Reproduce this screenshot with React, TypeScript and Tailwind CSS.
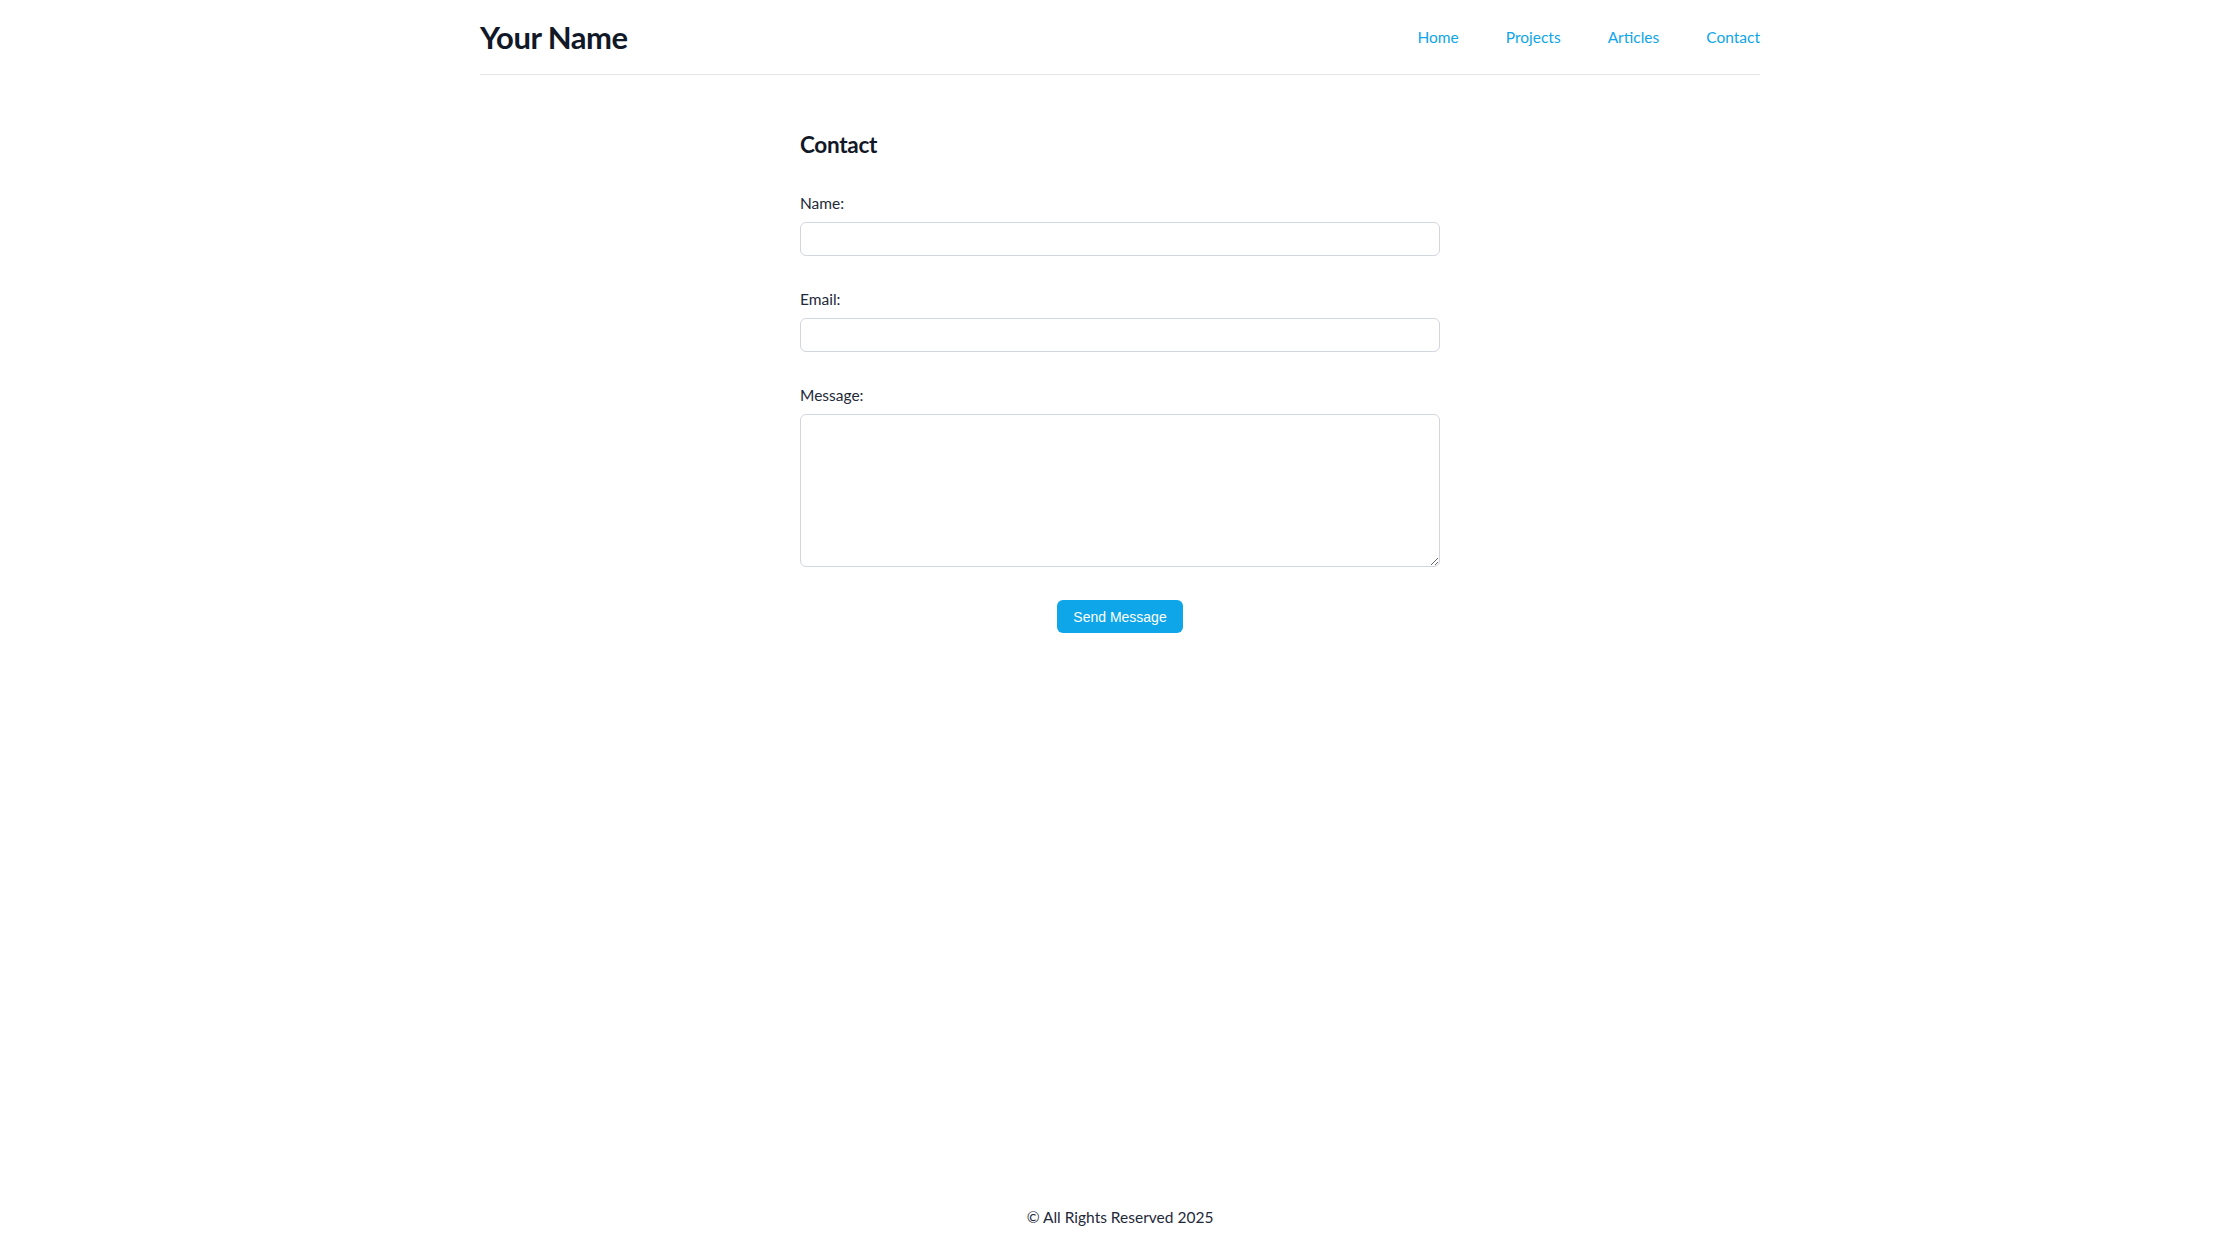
export default function App() {
  const fields = [
    { id: "name", label: "Name:", type: "text" },
    { id: "email", label: "Email:", type: "email" },
  ];

  return (
    <div className="min-h-screen flex flex-col bg-white text-gray-900 font-['Lato','Open_Sans',sans-serif]">
      <header className="mx-auto w-full max-w-[1280px] h-[75px] flex items-center justify-between border-b border-gray-200">
        <h1 className="text-[31px] font-bold tracking-[-0.5px] text-[#111827]">Your Name</h1>
        <nav className="flex gap-[47px] pt-[2px] text-[15.5px] text-[#0ea5e9]">
          <a href="#">Home</a>
          <a href="#">Projects</a>
          <a href="#">Articles</a>
          <a href="#">Contact</a>
        </nav>
      </header>

      <main className="flex-1 mx-auto w-full max-w-2xl px-4 pt-[54px]">
        <h2 className="text-[22.5px] leading-8 font-bold tracking-[-0.3px] text-[#111827] mb-8">Contact</h2>
        <form onSubmit={(e) => e.preventDefault()}>
          {fields.map((f) => (
            <div key={f.id} className="mb-[33px]">
              <label htmlFor={f.id} className="block text-[15.5px] leading-[21px] text-gray-800 mb-2">
                {f.label}
              </label>
              <input
                id={f.id}
                type={f.type}
                className="block w-full h-[34px] px-3 border border-gray-300 rounded-md"
              />
            </div>
          ))}
          <div className="mb-[33px]">
            <label htmlFor="message" className="block text-[15.5px] leading-[21px] text-gray-800 mb-2">
              Message:
            </label>
            <textarea
              id="message"
              className="block w-full h-[153px] px-3 py-2 border border-gray-300 rounded-md"
            />
          </div>
          <div className="flex justify-center">
            <button
              type="submit"
              className="h-[33px] px-4 rounded-md bg-[#0ea5e9] text-white text-sm font-medium font-['Liberation_Sans',Arial,sans-serif]"
            >
              Send Message
            </button>
          </div>
        </form>
      </main>

      <footer className="pt-8 pb-[31px] text-center text-[15.5px] text-gray-800">© All Rights Reserved 2025</footer>
    </div>
  );
}
